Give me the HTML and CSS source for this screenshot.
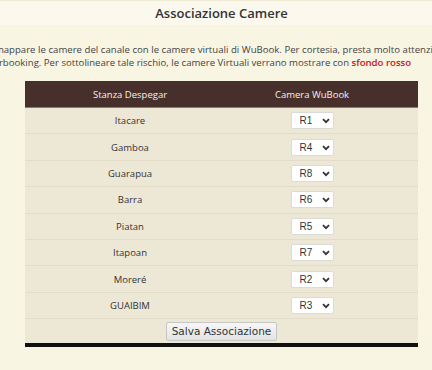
FILE: index.html
```html
<!DOCTYPE html>
<html lang="it">
<head>
    <meta charset="UTF-8">
    <title>Associazione Camere</title>
    <link rel="stylesheet" href="styles.css">
</head>
<body>
    <div class="page">
        <div class="topbar">
            <h1>Associazione Camere</h1>
        </div>

        <!-- info text, wider than the visible area -->
        <div class="intro">
            <div class="line line-first">di mappare le camere del canale con le camere virtuali di WuBook. Per cortesia, presta molto attenzione: un errore potrebbe causare</div>
            <div class="line">overbooking. Per sottolineare tale rischio, le camere Virtuali verrano mostrare con <span class="warn">sfondo rosso</span></div>
        </div>

        <form class="assoc">
            <table class="rooms">
                <thead>
                    <tr>
                        <th class="col-room">Stanza Despegar</th>
                        <th class="col-wb">Camera WuBook</th>
                    </tr>
                </thead>
                <tbody>
                    <tr><td class="col-room">Itacare</td><td class="col-wb"><span class="pick"><select><option>R1</option></select><svg viewBox="0 0 8 6" width="8" height="6"><path d="M1 1.2 L4 4.2 L7 1.2" fill="none" stroke="#333" stroke-width="1.8"/></svg></span></td></tr>
                    <tr><td class="col-room">Gamboa</td><td class="col-wb"><span class="pick"><select><option>R4</option></select><svg viewBox="0 0 8 6" width="8" height="6"><path d="M1 1.2 L4 4.2 L7 1.2" fill="none" stroke="#333" stroke-width="1.8"/></svg></span></td></tr>
                    <tr><td class="col-room">Guarapua</td><td class="col-wb"><span class="pick"><select><option>R8</option></select><svg viewBox="0 0 8 6" width="8" height="6"><path d="M1 1.2 L4 4.2 L7 1.2" fill="none" stroke="#333" stroke-width="1.8"/></svg></span></td></tr>
                    <tr><td class="col-room">Barra</td><td class="col-wb"><span class="pick"><select><option>R6</option></select><svg viewBox="0 0 8 6" width="8" height="6"><path d="M1 1.2 L4 4.2 L7 1.2" fill="none" stroke="#333" stroke-width="1.8"/></svg></span></td></tr>
                    <tr><td class="col-room">Piatan</td><td class="col-wb"><span class="pick"><select><option>R5</option></select><svg viewBox="0 0 8 6" width="8" height="6"><path d="M1 1.2 L4 4.2 L7 1.2" fill="none" stroke="#333" stroke-width="1.8"/></svg></span></td></tr>
                    <tr><td class="col-room">Itapoan</td><td class="col-wb"><span class="pick"><select><option>R7</option></select><svg viewBox="0 0 8 6" width="8" height="6"><path d="M1 1.2 L4 4.2 L7 1.2" fill="none" stroke="#333" stroke-width="1.8"/></svg></span></td></tr>
                    <tr><td class="col-room">Moreré</td><td class="col-wb"><span class="pick"><select><option>R2</option></select><svg viewBox="0 0 8 6" width="8" height="6"><path d="M1 1.2 L4 4.2 L7 1.2" fill="none" stroke="#333" stroke-width="1.8"/></svg></span></td></tr>
                    <tr><td class="col-room">GUAIBIM</td><td class="col-wb"><span class="pick"><select><option>R3</option></select><svg viewBox="0 0 8 6" width="8" height="6"><path d="M1 1.2 L4 4.2 L7 1.2" fill="none" stroke="#333" stroke-width="1.8"/></svg></span></td></tr>
                    <tr class="save-row">
                        <td colspan="2"><button type="button" class="save">Salva Associazione</button></td>
                    </tr>
                </tbody>
            </table>
        </form>
    </div>
</body>
</html>
```

FILE: styles.css
```css
html, body {
    margin: 0;
    padding: 0;
    overflow: hidden;
}

body {
    font-family: "Open Sans", Arial, sans-serif;
    background: #f9f5e3;
    color: #333;
}

.page {
    width: 443px;
}

.topbar {
    height: 25px;
    background: #fbf9ee;
    border-top: 1px solid #f1ecd6;
    box-sizing: border-box;
}

h1 {
    margin: 0;
    font-size: 13px;
    font-weight: 600;
    line-height: 24px;
    text-align: center;
    color: #333;
}

.intro {
    margin: 18px 0 0 -17px;
    font-size: 9.6px;
    line-height: 13px;
    color: #444;
}

.line {
    white-space: nowrap;
}

.line-first {
    margin-left: 1px;
    word-spacing: 0.1px;
}

.warn {
    color: #c8101a;
    font-weight: 600;
}

.assoc {
    margin: 12px 25px 0;
}

.rooms {
    width: 393px;
    border-collapse: collapse;
    font-size: 9.5px;
    border-bottom: 4px solid #111;
}

.rooms th {
    background: #47302c;
    color: #f4f0ea;
    font-weight: normal;
    height: 26px;
    padding: 0;
    border-bottom: 1px solid #8c7d72;
}

.rooms td {
    background: #ede8d6;
    height: 25.4px;
    padding: 0;
    text-align: center;
    border-bottom: 1px solid #e2dcc8;
}

.col-room {
    width: 210px;
}

.col-wb {
    padding-right: 29px !important;
}

.pick {
    position: relative;
    display: inline-block;
    vertical-align: middle;
}

.pick select {
    appearance: none;
    -webkit-appearance: none;
    width: 43px;
    height: 17px;
    margin: 0;
    padding: 0 0 0 8px;
    background: #fff;
    border: 1px solid #dcdcd6;
    border-radius: 2px;
    font-family: "Liberation Sans", Arial, sans-serif;
    font-size: 10px;
    color: #333;
}

.pick svg {
    position: absolute;
    right: 4px;
    top: 6px;
}

.save-row td {
    height: 24px;
    padding-top: 0;
    border-bottom: 1px solid #f6f1de;
}

.save {
    font-family: "DejaVu Sans", Verdana, sans-serif;
    font-size: 10.5px;
    color: #333;
    height: 19px;
    padding: 0 5px;
    background: linear-gradient(#f7f7f7, #e3e3e3);
    border: 1px solid #c6c6c6;
    border-radius: 2px;
    cursor: pointer;
}
```
